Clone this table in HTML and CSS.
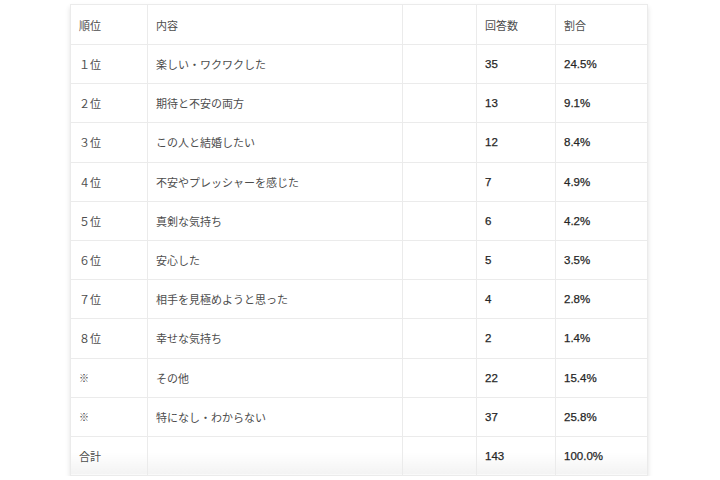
FILE: index.html
```html
<!DOCTYPE html>
<html lang="ja">
<head>
<meta charset="utf-8">
<link rel="stylesheet" href="styles.css">
</head>
<body>
<div class="wrap">
<table class="rank">
  <colgroup>
    <col class="c1"><col class="c2"><col class="c3"><col class="c4"><col class="c5">
  </colgroup>
  <tr class="head"><td>順位</td><td>内容</td><td></td><td>回答数</td><td>割合</td></tr>
  <tr><td>１位</td><td>楽しい・ワクワクした</td><td></td><td class="num">35</td><td class="num">24.5%</td></tr>
  <tr><td>２位</td><td>期待と不安の両方</td><td></td><td class="num">13</td><td class="num">9.1%</td></tr>
  <tr><td>３位</td><td>この人と結婚したい</td><td></td><td class="num">12</td><td class="num">8.4%</td></tr>
  <tr><td>４位</td><td>不安やプレッシャーを感じた</td><td></td><td class="num">7</td><td class="num">4.9%</td></tr>
  <tr><td>５位</td><td>真剣な気持ち</td><td></td><td class="num">6</td><td class="num">4.2%</td></tr>
  <tr><td>６位</td><td>安心した</td><td></td><td class="num">5</td><td class="num">3.5%</td></tr>
  <tr><td>７位</td><td>相手を見極めようと思った</td><td></td><td class="num">4</td><td class="num">2.8%</td></tr>
  <tr><td>８位</td><td>幸せな気持ち</td><td></td><td class="num">2</td><td class="num">1.4%</td></tr>
  <tr><td class="mark">※</td><td>その他</td><td></td><td class="num">22</td><td class="num">15.4%</td></tr>
  <tr><td class="mark">※</td><td>特になし・わからない</td><td></td><td class="num">37</td><td class="num">25.8%</td></tr>
  <tr class="total"><td>合計</td><td></td><td></td><td class="num">143</td><td class="num">100.0%</td></tr>
</table>
</div>
</body>
</html>
```
FILE: styles.css
```css
html, body {
  margin: 0;
  padding: 0;
  background: #ffffff;
}
.wrap {
  padding: 4px 0 0 70px;
}
.rank {
  border-collapse: collapse;
  table-layout: fixed;
  width: 577px;
  font-family: "Noto Sans CJK JP", "Liberation Sans", sans-serif;
  font-size: 11px;
  color: #4d4d4d;
  box-shadow: 0 3px 5px rgba(0, 0, 0, 0.12);
}
.c1 { width: 77px; }
.c2 { width: 255px; }
.c3 { width: 74px; }
.c4 { width: 79px; }
.c5 { width: 92px; }
.rank td {
  border: 1px solid #ebebeb;
  padding: 0 0 0 8px;
  height: 38.2px;
  vertical-align: middle;
  line-height: 14px;
  white-space: nowrap;
}
.rank tr.head td {
  height: 39px;
}
.rank td.num {
  font-family: "Liberation Sans", Arial, sans-serif;
  color: #262626;
  font-size: 11.5px;
  font-weight: normal;
  -webkit-text-stroke: 0.25px #262626;
}
.rank td.mark {
  font-size: 10px;
  color: #444444;
}
.rank tr.total td {
  background: linear-gradient(#ffffff 40%, #f3f3f3);
}
```
